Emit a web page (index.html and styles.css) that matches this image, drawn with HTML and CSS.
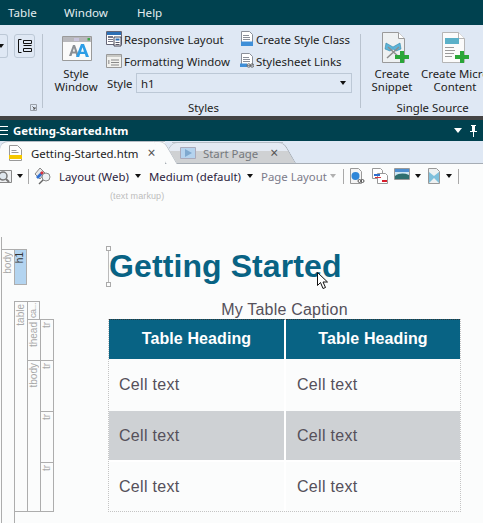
FILE: index.html
```html
<!DOCTYPE html>
<html lang="en">
<head>
    <meta charset="UTF-8">
    <title>Getting-Started.htm</title>
    <link rel="stylesheet" href="styles.css">
</head>
<body>
    <nav class="menu-bar">
        <span>Table</span>
        <span>Window</span>
        <span>Help</span>
    </nav>

    <section class="ribbon">
        <div class="ribbon-group group-first">
            <div class="cut-button"><span class="arrow"></span></div>
            <div class="icon-button">
                <svg width="16" height="16" viewBox="0 0 16 16"><path d="M4.500 1.500h-3v13h3" fill="none" stroke="#111"/><path d="M6.500 2.500h8v3h-8zM6.500 7.500h8M6.500 10.500h8v3h-8z" fill="none" stroke="#111"/></svg>
            </div>
            <svg class="launcher" width="7" height="7" viewBox="0 0 7 7"><path d="M.5.5h6v6h-6z" fill="none" stroke="#9aa0a8"/><path d="M2.500 2.500l2.500 2.500M5 3v2H3" fill="none" stroke="#555"/></svg>
        </div>

        <div class="ribbon-group group-styles">
            <div class="group-body">
                <div class="big-button style-window">
                    <svg width="30" height="25" viewBox="0 0 30 25">
                        <path d="M.5.5h29v24H.5z" fill="#fafafa" stroke="#9a9a9a"/>
                        <path d="M1 1h28v5H1z" fill="#b8b8bc"/><path d="M12 2h5v3h-5z" fill="#c9c4dc"/><path d="M25.500 2h2.500v2.500h-2.500z" fill="#3fa648"/>
                        <path d="M7 20L11 9h2l4 11h-2.500l-.8-2.500h-3.400L9.500 20zM10.800 15.500h2.200L12 12z" fill="#8b8f94"/>
                        <path d="M14 21L19 8h3l5 13h-3.200l-.9-3h-4.800l-.9 3zM19 15.800h3l-1.500-4.600z" fill="#2e9ee6"/>
                    </svg>
                    <span>Style<br>Window</span>
                </div>
                <div class="style-options">
                    <div class="option-row">
                        <div class="option-col col-a">
                            <svg width="16" height="16" viewBox="0 0 16 16"><path d="M.5.5h15v13H.5z" fill="#fff" stroke="#667"/><path d="M1 1h14v3H1z" fill="#2c6fb5"/><path d="M2 5h5v2H2zM2 8h5v1H2zM2 10h5v1H2z" fill="#778"/><path d="M8 6h7v9H8z" fill="#fff" stroke="#445"/><path d="M9.500 7.500h4v2h-4z" fill="#2c6fb5"/><path d="M9.500 11h4v1h-4zM9.500 13h4v1h-4z" fill="#556"/></svg>
                            <span>Responsive Layout</span>
                        </div>
                        <div class="option-col">
                            <svg width="14" height="16" viewBox="0 0 14 16"><path d="M1.500.5h8l3 3v9h-11z" fill="#fff" stroke="#8a8f99"/><path d="M3 4h6v1H3zM3 6h7v1H3zM3 8h7v1H3z" fill="#8a8f99"/><path d="M1 10.500h12V15H1z" fill="#3f8fd8"/></svg>
                            <span>Create Style Class</span>
                        </div>
                    </div>
                    <div class="option-row">
                        <div class="option-col col-a">
                            <svg width="16" height="14" viewBox="0 0 16 14"><path d="M.5.5h15v13H.5z" fill="#f1f1ee" stroke="#999"/><path d="M1 1h14v2H1z" fill="#c8c8c4"/><path d="M5 5.500h8v1H5zM5 8h8v1H5zM5 10.500h8v1H5z" fill="#888"/><path d="M2 6h1.500v4H2z" fill="#aaa"/></svg>
                            <span>Formatting Window</span>
                        </div>
                        <div class="option-col">
                            <svg width="14" height="16" viewBox="0 0 14 16"><path d="M1.500.5h8l3 3v9h-11z" fill="#fff" stroke="#8a8f99"/><path d="M3 4h6v1H3zM3 6h7v1H3zM3 8h7v1H3z" fill="#8a8f99"/><path d="M0 10.500h7V14H0z" fill="#3f8fd8"/><path d="M7 12.500a1.700 1.700 0 0 1 3.400 0a1.700 1.700 0 0 1-3.400 0zM10.400 12.500a1.700 1.700 0 0 1 3.400 0a1.700 1.700 0 0 1-3.400 0z" fill="none" stroke="#666"/></svg>
                            <span>Stylesheet Links</span>
                        </div>
                    </div>
                    <div class="style-row">
                        <label>Style</label>
                        <div class="combo"><span>h1</span><span class="arrow"></span></div>
                    </div>
                </div>
            </div>
            <div class="group-label label-styles">Styles</div>
        </div>

        <div class="ribbon-group group-source">
            <div class="group-body">
                <div class="big-button snippet">
                    <svg width="28" height="32" viewBox="0 0 28 32">
                        <path d="M.5.500h16l6 6v24H.5z" fill="#eef1f2" stroke="#9a9a9a"/><path d="M16.500.5v6h6" fill="#fff" stroke="#9a9a9a"/>
                        <path d="M4 11l7 4 7-4 1 6-5 2-3-2-3 2-5-2z" fill="#5cb4d8" stroke="#2f86ab" stroke-width=".6"/>
                        <path d="M5 26l12-11M18 26L6 15" stroke="#8d8d8d" stroke-width="1.500"/>
                        <path d="M18 19h4v4h5v4h-5v4h-4v-4h-5v-4h5z" fill="#2ba639"/>
                    </svg>
                    <span>Create<br>Snippet</span>
                </div>
                <div class="big-button micro">
                    <svg width="28" height="32" viewBox="0 0 28 32">
                        <path d="M.5.500h16l6 6v24H.5z" fill="#fbfbfb" stroke="#b5b5b5"/><path d="M16.500.5v6h6" fill="#fff" stroke="#b5b5b5"/>
                        <path d="M3 6h14v6H3z" fill="#5ab0c8"/>
                        <path d="M3 15h9v1H3zM3 18h10v1H3zM3 21h9v1H3zM3 24h7v1H3z" fill="#9a9a9a"/>
                        <path d="M18 19h4v4h5v4h-5v4h-4v-4h-5v-4h5z" fill="#2ba639"/>
                    </svg>
                    <span>Create Micro<br>Content</span>
                </div>
            </div>
            <div class="group-label label-source">Single Source</div>
        </div>
    </section>

    <div class="splitter"></div>

    <header class="doc-title">
        <div class="grip"><i></i><i></i><i></i></div>
        <strong>Getting-Started.htm</strong>
        <span class="title-tools">
            <span class="title-arrow"></span>
            <svg width="9" height="12" viewBox="0 0 9 12"><path d="M2 0h5v1H6v5h2v1H5v5H4V7H1V6h2V1H2z" fill="#fff"/></svg>
        </span>
    </header>

    <div class="tab-strip">
        <div class="tab tab-active">
            <svg width="13" height="16" viewBox="0 0 13 16"><path d="M.5.500h8l4 4v11h-12z" fill="#fff" stroke="#999"/><path d="M2.500 5h5v1h-5zM2.500 7h7v1h-7z" fill="#999"/><path d="M0 10h13v4H0z" fill="#f5c800"/></svg>
            <span>Getting-Started.htm</span>
            <span class="tab-close">×</span>
        </div>
        <div class="tab tab-idle">
            <svg width="16" height="14" viewBox="0 0 16 14"><path d="M.5 1.500h15v11H.5z" fill="#b5d3ee" stroke="#aab"/><path d="M5 3l7 4-7 4z" fill="#7fa9cf"/></svg>
            <span>Start Page</span>
            <span class="tab-close">×</span>
        </div>
    </div>

    <div class="tool-strip">
        <svg class="tool-zoom" width="12" height="15" viewBox="0 0 12 15"><path d="M0 1.500h11.500v12H0" fill="#eef0f2" stroke="#888"/><circle cx="3" cy="7" r="4" fill="#dfe7ee" stroke="#777" stroke-width="1.500"/><path d="M6 10l3 3" stroke="#777" stroke-width="2"/></svg>
        <span class="arrow tool-a1"></span>
        <span class="tool-sep sep-1"></span>
        <svg class="tool-pick" width="18" height="18" viewBox="0 0 18 18"><path d="M1 7l5-6 5 5-5 6z" fill="#e8e8e8" stroke="#888"/><path d="M2 10l5-5 2 2-5 5z" fill="#2f6fd0"/><path d="M6 6l2-2 2 2-2 2z" fill="#d8323c"/><circle cx="12" cy="10" r="4" fill="#eef2f4" stroke="#888"/><path d="M9 13l-4 4" stroke="#666" stroke-width="1.500"/></svg>
        <span class="tool-text t-layout">Layout (Web)</span>
        <span class="arrow tool-a2"></span>
        <span class="tool-text t-medium">Medium (default)</span>
        <span class="arrow tool-a3"></span>
        <span class="tool-text t-page">Page Layout</span>
        <span class="arrow arrow-off tool-a4"></span>
        <span class="tool-sep sep-2"></span>
        <svg class="tool-i1" width="15" height="16" viewBox="0 0 15 16"><path d="M.5.500h8l3 3v12h-11z" fill="#f4f4f4" stroke="#999"/><circle cx="5.500" cy="8" r="4" fill="#2f86d8"/><path d="M8 13a1.500 1.500 0 0 1 3 0a1.500 1.500 0 0 1-3 0zM11 13a1.500 1.500 0 0 1 3 0a1.500 1.500 0 0 1-3 0z" fill="none" stroke="#555"/></svg>
        <svg class="tool-i2" width="16" height="16" viewBox="0 0 16 16"><path d="M.5.500h8l2 2v8h-10z" fill="#fff" stroke="#999"/><path d="M5.500 5.500h8l2 2v8h-10z" fill="#fff" stroke="#999"/><path d="M2 6h6v2H2z" fill="#2f6fd0"/><path d="M3 9h6v1H3z" fill="#d8323c"/><path d="M10 12h5v2h-5z" fill="#d81e2c"/></svg>
        <svg class="tool-i3" width="16" height="12" viewBox="0 0 16 12"><path d="M.5.500h15v11H.5z" fill="#cfe6f2" stroke="#999"/><path d="M1 1h14v3H1z" fill="#4f8fd0"/><path d="M1 8c4-3 9-3 14-1v4H1z" fill="#2f6f6f"/></svg>
        <span class="arrow tool-a5"></span>
        <svg class="tool-i4" width="12" height="16" viewBox="0 0 12 16"><path d="M.5.500h8l3 3v12h-11z" fill="#eef1f2" stroke="#999"/><path d="M1 4l5 4 5-4v11l-5-5-5 5z" fill="#7fc0dc"/></svg>
        <span class="arrow tool-a6"></span>
        <span class="tool-sep sep-3"></span>
    </div>

    <main class="editor">
        <div class="markup-bar">
            <div class="mk mk-body"><span>body</span></div>
            <div class="mk mk-h1"><span>h1</span></div>
            <div class="mk mk-table"><span>table</span></div>
            <div class="mk mk-cap"><span>ca...</span></div>
            <div class="mk mk-thead"><span>thead</span></div>
            <div class="mk mk-tbody"><span>tbody</span></div>
            <div class="mk mk-tr mk-tr1"><span>tr</span></div>
            <div class="mk mk-tr mk-tr2"><span>tr</span></div>
            <div class="mk mk-tr mk-tr3"><span>tr</span></div>
            <div class="mk mk-tr mk-tr4"><span>tr</span></div>
            <div class="mk mk-end"></div>
        </div>

        <div class="page">
            <div class="hint">(text markup)</div>
            <h1 class="page-title">
                Getting Started
                <i class="handle handle-top"></i>
                <i class="handle handle-bottom"></i>
            </h1>
            <table class="data-table">
                <caption>My Table Caption</caption>
                <thead>
                    <tr><th>Table Heading</th><th>Table Heading</th></tr>
                </thead>
                <tbody>
                    <tr><td>Cell text</td><td>Cell text</td></tr>
                    <tr class="row-alt"><td>Cell text</td><td>Cell text</td></tr>
                    <tr><td>Cell text</td><td>Cell text</td></tr>
                </tbody>
            </table>
        </div>

        <svg class="cursor" width="14" height="18" viewBox="0 0 14 18"><path d="M.5.500v13l3-3 2.500 6 2.500-1-2.500-5.500h4.500z" fill="#fff" stroke="#111"/></svg>
    </main>
</body>
</html>
```

FILE: styles.css
```css
* {
    box-sizing: border-box;
}

html, body {
    height: 100%;
}

body {
    margin: 0;
    overflow: hidden;
    font-family: "Noto Sans", Arial, sans-serif;
    font-size: 11.4px;
    color: #222;
    background-color: #fbfcfc;
    display: flex;
    flex-direction: column;
}

svg {
    flex: none;
    display: block;
}

.arrow {
    display: inline-block;
    flex: none;
    width: 0;
    height: 0;
    border-left: 3.5px solid transparent;
    border-right: 3.5px solid transparent;
    border-top: 4px solid #111;
}

.arrow-off {
    border-top-color: #b0b0b0;
}

/* top menu */
.menu-bar {
    height: 25px;
    flex: none;
    background-color: #00414f;
    color: #e4edf0;
    display: flex;
    align-items: center;
    font-size: 11.6px;
    padding-left: 8px;
}

.menu-bar span:nth-child(1) {
    width: 56px;
}

.menu-bar span:nth-child(2) {
    width: 73px;
}

/* ribbon */
.ribbon {
    height: 91px;
    flex: none;
    background-color: #dfe8f4;
    display: flex;
    overflow: hidden;
}

.ribbon-group {
    position: relative;
    flex: none;
    border-right: 1px solid #b9c3cf;
    margin: 9px 0 8px;
}

.group-first {
    width: 43px;
    display: flex;
    align-items: flex-start;
}

.cut-button {
    width: 8px;
    height: 24px;
    border: 1px solid #bcc8d6;
    border-left: none;
    border-radius: 0 3px 3px 0;
    display: flex;
    align-items: center;
}

.cut-button .arrow {
    margin-left: -2px;
}

.icon-button {
    width: 21px;
    height: 24px;
    margin-left: 6px;
    border: 1px solid #bcc8d6;
    border-radius: 3px;
    display: flex;
    align-items: center;
    justify-content: center;
}

.launcher {
    position: absolute;
    left: 30px;
    bottom: -3px;
}

.group-styles {
    width: 318px;
}

.group-body {
    display: flex;
}

.big-button {
    display: flex;
    flex-direction: column;
    align-items: center;
    text-align: center;
    line-height: 13px;
    white-space: nowrap;
}

.style-window {
    width: 60px;
    margin-left: 3px;
    padding-top: 2px;
}

.style-window svg {
    margin-left: 2px;
}

.style-window span {
    margin-top: 6px;
}

.style-options {
    display: flex;
    flex-direction: column;
}

.option-row {
    height: 22px;
    display: flex;
    align-items: center;
}

.option-row:first-child {
    margin-top: -6px;
}

.option-col {
    display: flex;
    align-items: center;
    gap: 2px;
    white-space: nowrap;
}

.col-a {
    width: 134px;
}

.style-row {
    display: flex;
    align-items: center;
    margin-top: 1px;
}

.style-row label {
    width: 30px;
    padding-left: 1px;
}

.combo {
    width: 216px;
    height: 20px;
    border: 1px solid #bcc8d6;
    display: flex;
    align-items: center;
    justify-content: space-between;
    padding: 0 4px;
}

.combo .arrow {
    margin-right: 1px;
}

.group-label {
    position: absolute;
    bottom: -7px;
    text-align: center;
    line-height: 14px;
}

.label-styles {
    left: 0;
    width: 321px;
}

.group-source {
    width: 130px;
    border-right: none;
}

.label-source {
    left: 0;
    width: 143px;
}

.snippet {
    width: 60px;
    margin-left: 1px;
}

.snippet svg {
    margin: -2px 0 0 8px;
}

.micro {
    width: 66px;
}

.micro svg {
    margin: -2px 0 0 2px;
}

.snippet span, .micro span {
    margin-top: 3px;
}

.splitter {
    height: 4px;
    flex: none;
    background-color: #444;
}

/* document title */
.doc-title {
    height: 21px;
    flex: none;
    background-color: #00414f;
    color: #fff;
    display: flex;
    align-items: center;
    padding-right: 5px;
}

.doc-title strong {
    margin-left: 5px;
}

.grip {
    width: 8px;
    display: flex;
    flex-direction: column;
    gap: 3px;
}

.grip i {
    height: 1px;
    background-color: #fff;
}

.title-tools {
    margin-left: auto;
    display: flex;
    align-items: center;
    gap: 7px;
}

.title-arrow {
    border-left: 4.5px solid transparent;
    border-right: 4.5px solid transparent;
    border-top: 5px solid #fff;
}

/* tabs */
.tab-strip {
    height: 23px;
    flex: none;
    background-color: #dfe8f4;
    border-bottom: 1px solid #a6adb5;
    display: flex;
    align-items: flex-end;
}

.tab {
    display: flex;
    align-items: center;
    position: relative;
    white-space: nowrap;
    border-top: 1px solid #b7bec6;
}

.tab::before, .tab::after {
    content: "";
    position: absolute;
    top: -1px;
    bottom: 0;
    background: inherit;
    border-top: 1px solid #b7bec6;
}

.tab-active {
    width: 165px;
    height: 23px;
    margin-bottom: -1px;
    background-color: #fbfcfc;
    border-radius: 8px 0 0 0;
    padding-left: 9px;
    gap: 9px;
    z-index: 2;
}

.tab-active::after {
    left: 160px;
    width: 10px;
    border-right: 1px solid #b7bec6;
    border-radius: 0 6px 0 0;
    transform: skewX(30deg);
}

.tab-active::before {
    display: none;
}

.tab-idle {
    width: 111px;
    height: 21px;
    margin-left: 7px;
    background: linear-gradient(#e4eaf3 8px, #cfd1d3 8px);
    color: #75797e;
    padding-left: 8px;
    gap: 7px;
}

.tab-idle::before {
    left: -6px;
    width: 12px;
    border-left: 1px solid #b7bec6;
    border-radius: 6px 0 0 0;
    transform: skewX(-30deg);
}

.tab-idle::after {
    left: 105px;
    width: 12px;
    border-right: 1px solid #9ea4ab;
    border-radius: 0 6px 0 0;
    transform: skewX(30deg);
}

.tab-idle svg, .tab-idle span {
    position: relative;
    z-index: 1;
}

.tab-close {
    font-size: 14px;
    line-height: 1;
    color: #555;
}

.tab-idle .tab-close {
    margin-left: 5px;
}

/* toolbar */
.tool-strip {
    height: 26px;
    flex: none;
    padding-bottom: 2px;
    display: flex;
    align-items: center;
    white-space: nowrap;
}

.tool-sep {
    width: 1px;
    height: 15px;
    background-color: #a9a9a9;
}

.tool-a1 { margin-left: 5px; }
.sep-1 { margin-left: 5px; }
.tool-pick { margin-left: 5px; }
.t-layout { margin-left: 7px; width: 71px; }
.tool-a2 { margin-left: 5px; }
.t-medium { margin-left: 8px; width: 92px; }
.tool-a3 { margin-left: 6px; }
.t-page { margin-left: 8px; width: 65px; color: #7b7b8a; }
.tool-a4 { margin-left: 4px; }
.sep-2 { margin-left: 7px; }
.tool-i1 { margin-left: 6px; }
.tool-i2 { margin-left: 7px; }
.tool-i3 { margin-left: 6px; margin-top: -4px; }
.tool-a5 { margin-left: 5px; }
.tool-i4 { margin-left: 7px; }
.tool-a6 { margin-left: 6px; }
.sep-3 { margin-left: 6px; }

.t-layout, .t-medium {
    color: #2c2440;
}

/* document area */
.editor {
    flex: 1;
    display: flex;
    position: relative;
    overflow: hidden;
}

.markup-bar {
    flex: none;
    width: 53px;
    margin: 47px 0 0 1px;
    display: grid;
    grid-template-columns: 13px 13px 13px 14px;
    grid-template-rows: 12px 36px 16px 18px 41px 51px 51px 49px 1fr;
    color: #a8a8a8;
    font-family: "Liberation Sans", Arial, sans-serif;
    font-size: 10px;
    line-height: 12px;
}

.markup-bar::before {
    content: "";
    grid-column: 1;
    grid-row: 1;
    border-left: 1px solid #adadad;
}

.mk {
    border: 1px solid #adadad;
    border-width: 1px 0 0 1px;
    writing-mode: vertical-rl;
    padding-top: 2px;
    overflow: hidden;
    white-space: nowrap;
}

.mk span {
    display: inline-block;
    transform: rotate(180deg);
}

.mk-body {
    grid-column: 1;
    grid-row: 2 / 10;
}

.mk-h1 {
    grid-column: 2;
    grid-row: 2;
    background-color: #b3d4f0;
    color: #333;
    border: 1px solid #adadad;
}

.mk-table {
    grid-column: 2;
    grid-row: 4 / 9;
}

.mk-cap {
    grid-column: 3;
    grid-row: 4;
    border-right: 1px solid #adadad;
    padding-top: 1px;
    font-size: 9px;
    letter-spacing: -.4px;
}

.mk-thead {
    grid-column: 3;
    grid-row: 5;
}

.mk-tbody {
    grid-column: 3;
    grid-row: 6 / 9;
}

.mk-tr {
    grid-column: 4;
    border-right: 1px solid #adadad;
}

.mk-tr1 { grid-row: 5; }
.mk-tr2 { grid-row: 6; }
.mk-tr3 { grid-row: 7; }
.mk-tr4 { grid-row: 8; }

.mk-end {
    grid-column: 2 / 5;
    grid-row: 9;
}

.page {
    width: 353px;
    margin-left: 54px;
    position: relative;
}

.hint {
    font-family: "Liberation Sans", Arial, sans-serif;
    font-size: 9px;
    letter-spacing: .1px;
    line-height: 11px;
    color: #bdbdbd;
    margin: 1px 0 0 2px;
}

.page-title {
    position: relative;
    font-family: "Liberation Sans", Arial, sans-serif;
    font-size: 32px;
    font-weight: bold;
    letter-spacing: .1px;
    line-height: 36px;
    color: #086384;
    margin: 46px 0 0;
    padding-left: 1px;
    box-shadow: inset 1px 0 0 #bbb;
    height: 37px;
    white-space: nowrap;
}

.handle {
    position: absolute;
    left: -2px;
    width: 5px;
    height: 5px;
    border: 1px solid #aaa;
    background-color: #fbfcfc;
}

.handle-top {
    top: -2px;
}

.handle-bottom {
    bottom: -2px;
}

.data-table {
    width: 353px;
    border-collapse: separate;
    border-spacing: 0;
    table-layout: fixed;
    font-family: "Liberation Sans", Arial, sans-serif;
    font-size: 16px;
    color: #55505a;
    border: 1px dotted #c4c4c4;
    border-top: none;
}

.data-table caption {
    line-height: 18px;
    letter-spacing: .2px;
    margin-top: 15px;
    height: 19px;
    padding-top: 1px;
}

.data-table th {
    height: 40px;
    padding: 0 0 2px;
    background-color: #086384;
    color: #fff;
    font-weight: bold;
    letter-spacing: .1px;
    border-top: 1px dotted #333;
}

.data-table td {
    height: 51px;
    padding: 0 0 0 11px;
    letter-spacing: .3px;
}

.data-table th:first-child, .data-table td:first-child {
    width: 177px;
    border-right: 2px solid #fff;
}

.data-table td:first-child {
    padding-left: 10px;
}

.data-table tbody tr:first-child td {
    height: 52px;
}

.data-table tbody tr:last-child td {
    height: 49px;
}

.row-alt td {
    background-color: #ced1d4;
    border-bottom: 2px solid #fff;
}

.cursor {
    position: absolute;
    left: 317px;
    top: 82px;
}
```
